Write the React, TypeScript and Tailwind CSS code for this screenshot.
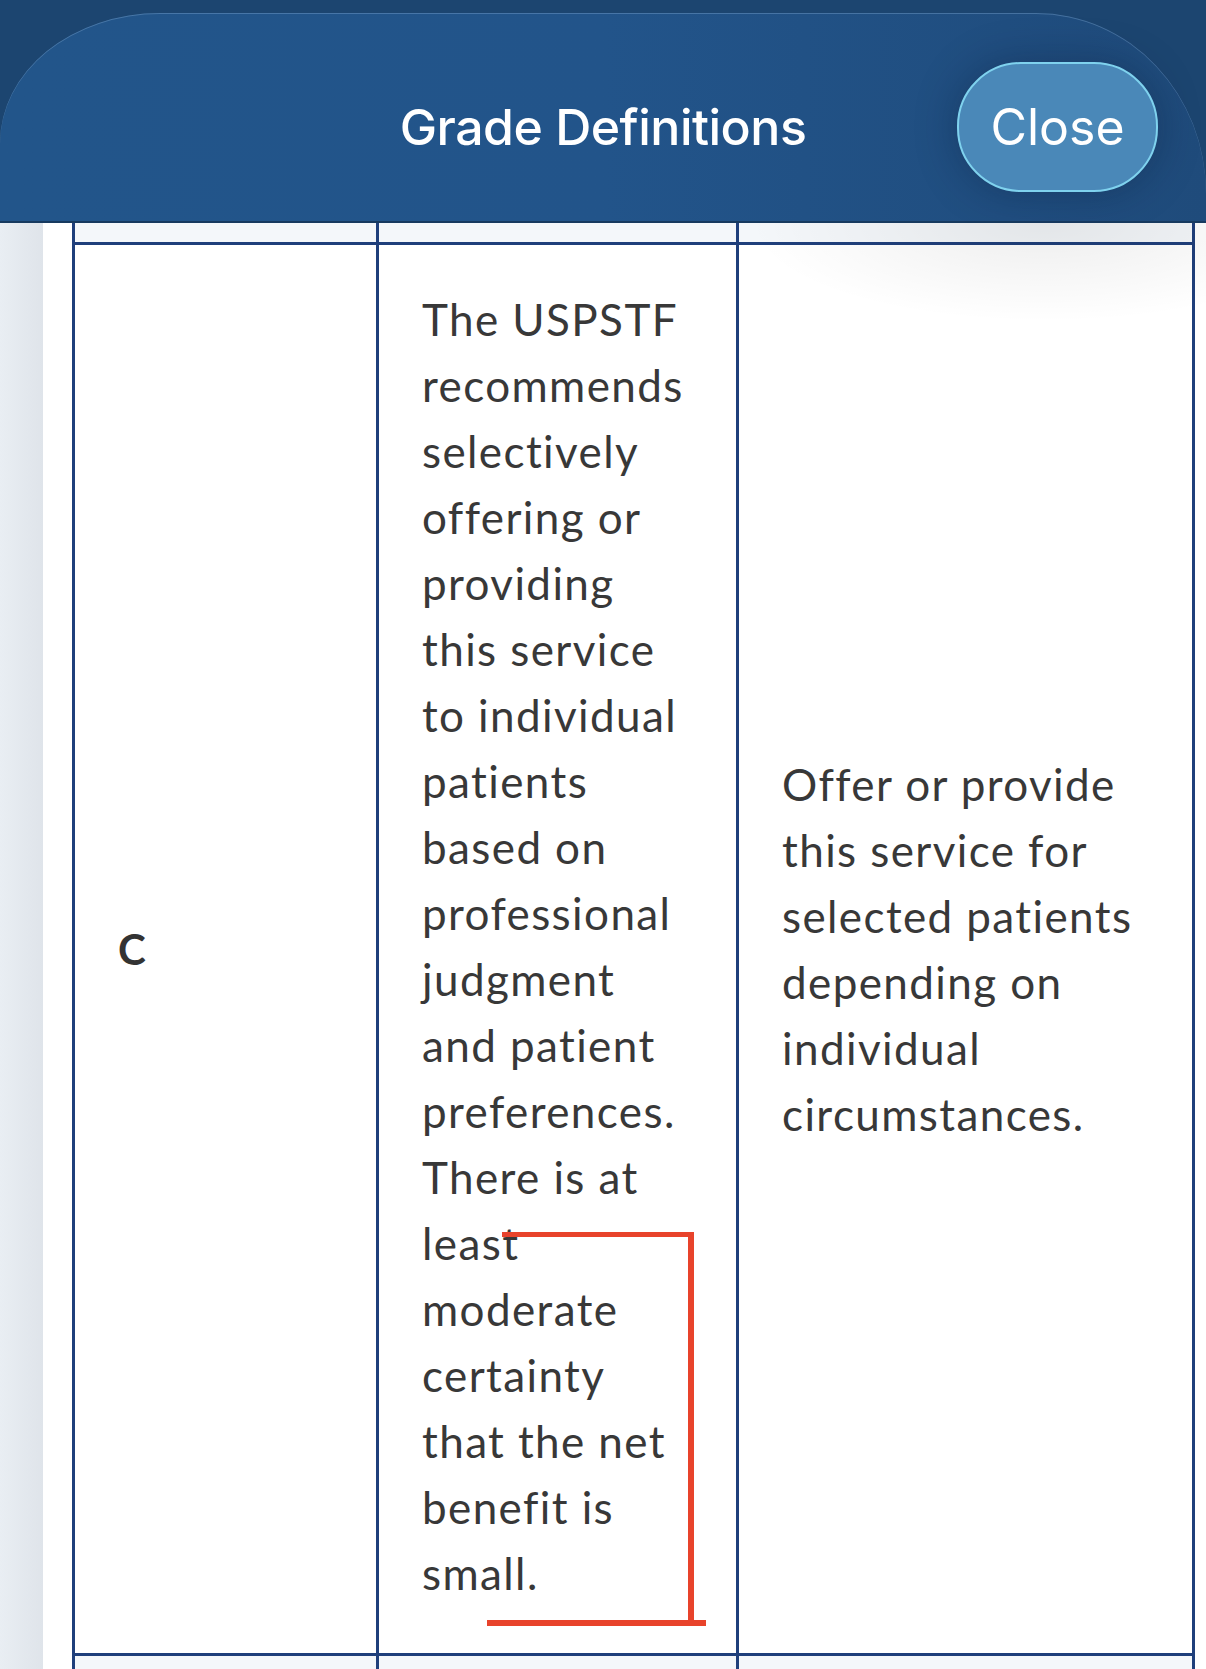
const recommendation = [
  'The USPSTF',
  'recommends',
  'selectively',
  'offering or',
  'providing',
  'this service',
  'to individual',
  'patients',
  'based on',
  'professional',
  'judgment',
  'and patient',
  'preferences.',
  'There is at',
  'least',
  'moderate',
  'certainty',
  'that the net',
  'benefit is',
  'small.',
];

const suggestion = [
  'Offer or provide',
  'this service for',
  'selected patients',
  'depending on',
  'individual',
  'circumstances.',
];

function Lines({ lines }: { lines: string[] }) {
  return (
    <>
      {lines.map((line) => (
        <span key={line} className="block whitespace-nowrap">
          {line}
        </span>
      ))}
    </>
  );
}

export default function App() {
  return (
    <div className="relative h-[1669px] w-[1206px] overflow-hidden bg-white">
      {/* Header */}
      <div className="bg-[#1c4570] pt-[13px]">
        <div className="flex h-[210px] items-center rounded-tl-[160px_130px] rounded-tr-[170px_180px] border-b-2 border-[#173a5f] bg-gradient-to-r from-[#22558a] via-[#22548a] to-[#1f4b7b] pt-[20px] font-['Inter',sans-serif] shadow-[inset_0_1px_0_rgba(140,180,220,0.35)]">
          <div className="w-[249px]" />
          <h1 className="flex-1 text-center text-[50px] font-medium leading-none tracking-[-0.5px] text-white">
            Grade Definitions
          </h1>
          <div className="flex w-[249px] justify-end pr-[48px]">
            <button className="h-[130px] w-[201px] rounded-[64px] border-2 border-[#7fd2ee] bg-[#4a88b8] text-[50px] leading-none text-white shadow-[0_0_40px_rgba(10,25,55,0.35)]">
              Close
            </button>
          </div>
        </div>
      </div>

      {/* Body */}
      <div className="flex">
        <div className="h-[1446px] w-[43px] bg-gradient-to-r from-[#e9eef3] to-[#dfe4ea]" />
        <div className="flex-1 pl-[29px] font-['Lato',sans-serif] text-[44px] leading-[66px] tracking-[1.4px] text-[#383838]">
          <div className="grid w-[1123px] grid-cols-[304px_360px_459px]">
            {/* tail of the header row */}
            <div className="h-[22px] border-b-[3px] border-l-[3px] border-[#1f3f7b] bg-[#f4f7fa]" />
            <div className="h-[22px] border-b-[3px] border-l-[3px] border-[#1f3f7b] bg-[#f4f7fa]" />
            <div className="h-[22px] border-x-[3px] border-b-[3px] border-[#1f3f7b] bg-[#f4f7fa]" />

            {/* Grade C */}
            <div className="flex flex-col justify-center border-b-[3px] border-l-[3px] border-[#1f3f7b] pl-[43px] text-[42px] font-bold tracking-normal text-[#333]">
              C
            </div>
            <div className="flex flex-col justify-center border-b-[3px] border-l-[3px] border-[#1f3f7b] pt-[41px] pb-[47px] pl-[43px]">
              <Lines lines={recommendation} />
            </div>
            <div className="flex flex-col justify-center border-x-[3px] border-b-[3px] border-[#1f3f7b] pl-[43px]">
              <Lines lines={suggestion} />
            </div>

            {/* next row */}
            <div className="h-[40px] border-l-[3px] border-[#1f3f7b] bg-[#f4f7fa]" />
            <div className="h-[40px] border-l-[3px] border-[#1f3f7b] bg-[#f4f7fa]" />
            <div className="h-[40px] border-x-[3px] border-[#1f3f7b] bg-[#f4f7fa]" />
          </div>
        </div>
      </div>

      {/* soft shadow cast below the header */}
      <div className="pointer-events-none absolute right-0 top-[223px] h-[100px] w-[460px] bg-[radial-gradient(ellipse_at_65%_0%,rgba(0,0,0,0.07),transparent_70%)]" />

      {/* red markup bracket */}
      <svg className="pointer-events-none absolute left-0 top-0" width="1206" height="1669">
        <line x1="502" y1="1234.5" x2="694" y2="1234.5" stroke="#e8432b" strokeWidth="5" />
        <line x1="691" y1="1232" x2="691" y2="1620" stroke="#e8432b" strokeWidth="6" />
        <line x1="487" y1="1623" x2="706" y2="1623" stroke="#e8432b" strokeWidth="6" />
      </svg>
    </div>
  );
}
